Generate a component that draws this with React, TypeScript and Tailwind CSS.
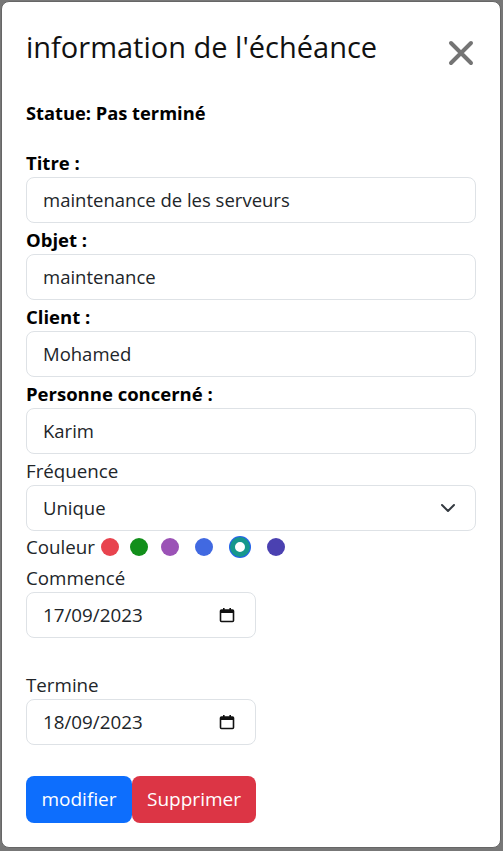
import React from "react";

const fields = [
  { label: "Titre :", value: "maintenance de les serveurs" },
  { label: "Objet :", value: "maintenance" },
  { label: "Client :", value: "Mohamed" },
  { label: "Personne concerné :", value: "Karim" },
];

const colors = [
  { cls: "ml-[6px] h-[18px] w-[18px] bg-[#e8434e]" },
  { cls: "ml-[11px] h-[18px] w-[18px] bg-[#128f1b]" },
  { cls: "ml-[13px] h-[18px] w-[18px] bg-[#9b52b6]" },
  { cls: "ml-[16px] h-[18px] w-[18px] bg-[#4169e1]" },
  { cls: "ml-[17px] h-[20px] w-[20px] border-[5px] border-[#16978c] bg-white ring-1 ring-[#2563eb]" },
  { cls: "ml-[17px] h-[18px] w-[18px] bg-[#4b41b1]" },
];

function CalendarIcon() {
  return (
    <svg width="16" height="16" viewBox="0 0 16 16" fill="none">
      <rect x="1.5" y="3" width="13" height="11.5" rx="1" stroke="#111" strokeWidth="1.6" />
      <rect x="1.5" y="3" width="13" height="3" fill="#111" />
      <rect x="4" y="1" width="1.6" height="3" fill="#111" />
      <rect x="10.4" y="1" width="1.6" height="3" fill="#111" />
    </svg>
  );
}

function DateField({ value }: { value: string }) {
  return (
    <div className="flex h-[46px] w-[230px] items-center justify-between rounded-lg border border-[#dee2e6] pl-4 pr-[20px] text-[18.8px] text-[#212529]">
      <span>{value}</span>
      <CalendarIcon />
    </div>
  );
}

export default function App() {
  return (
    <div
      className="h-[851px] w-[503px] bg-[#777777] pb-[3px] pl-[1px] pr-[2px] pt-[1px]"
      style={{ fontFamily: '"Open Sans", "Noto Sans", sans-serif' }}
    >
      <div className="flex h-[847px] w-[500px] flex-col rounded-lg border border-[#666] bg-white px-[24px] pt-[27px]">
        {/* header */}
        <div className="flex h-[36px] items-center justify-between">
          <h1 className="whitespace-nowrap text-[29px] leading-[36px] text-[#111]">information de l'échéance</h1>
          <button className="mr-[2px] mt-[11px]" aria-label="Fermer">
            <svg width="26" height="26" viewBox="0 0 26 26">
              <path d="M3 3 L23 23 M23 3 L3 23" stroke="#747474" strokeWidth="4" strokeLinecap="round" />
            </svg>
          </button>
        </div>

        <p className="mt-[36px] text-[18.3px] font-bold leading-[24px] text-black">Statue: Pas terminé</p>

        <div className="mt-[26px] flex flex-col">
          {fields.map((f, i) => (
            <div key={i} className={i > 0 ? "mt-[5px]" : ""}>
              <label className="mb-[2px] block text-[18.5px] font-bold leading-[24px] text-black">{f.label}</label>
              <div className="flex h-[46px] items-center rounded-lg border border-[#dee2e6] px-4 text-[18.5px] text-[#212529]">
                {f.value}
              </div>
            </div>
          ))}

          <label className="mb-[2px] mt-[5px] block text-[18.75px] leading-[24px] text-[#212529]">Fréquence</label>
          <div className="flex h-[46px] items-center justify-between rounded-lg border border-[#dee2e6] pl-4 pr-[19px] text-[18.5px] text-[#212529]">
            <span>Unique</span>
            <svg width="16" height="16" viewBox="0 0 16 16" fill="none">
              <path d="m2 5 6 6 6-6" stroke="#343a40" strokeWidth="2" strokeLinecap="round" strokeLinejoin="round" />
            </svg>
          </div>

          <div className="mt-[4px] flex h-[24px] items-center">
            <span className="text-[18.75px] leading-[24px] text-[#212529]">Couleur</span>
            {colors.map((c, i) => (
              <span key={i} className={"block shrink-0 rounded-full " + c.cls} />
            ))}
          </div>

          <label className="mb-[2px] mt-[7px] block text-[18.75px] leading-[24px] text-[#212529]">Commencé</label>
          <DateField value="17/09/2023" />

          <label className="mb-[2px] mt-[35px] block text-[18.75px] leading-[24px] text-[#212529]">Termine</label>
          <DateField value="18/09/2023" />

          <div className="mt-[31px] flex">
            <button className="h-[47px] w-[106px] rounded-lg bg-[#0d6efd] text-[19px] text-white">modifier</button>
            <button className="h-[47px] w-[124px] rounded-lg bg-[#dc3545] text-[19px] text-white">Supprimer</button>
          </div>
        </div>
      </div>
    </div>
  );
}
